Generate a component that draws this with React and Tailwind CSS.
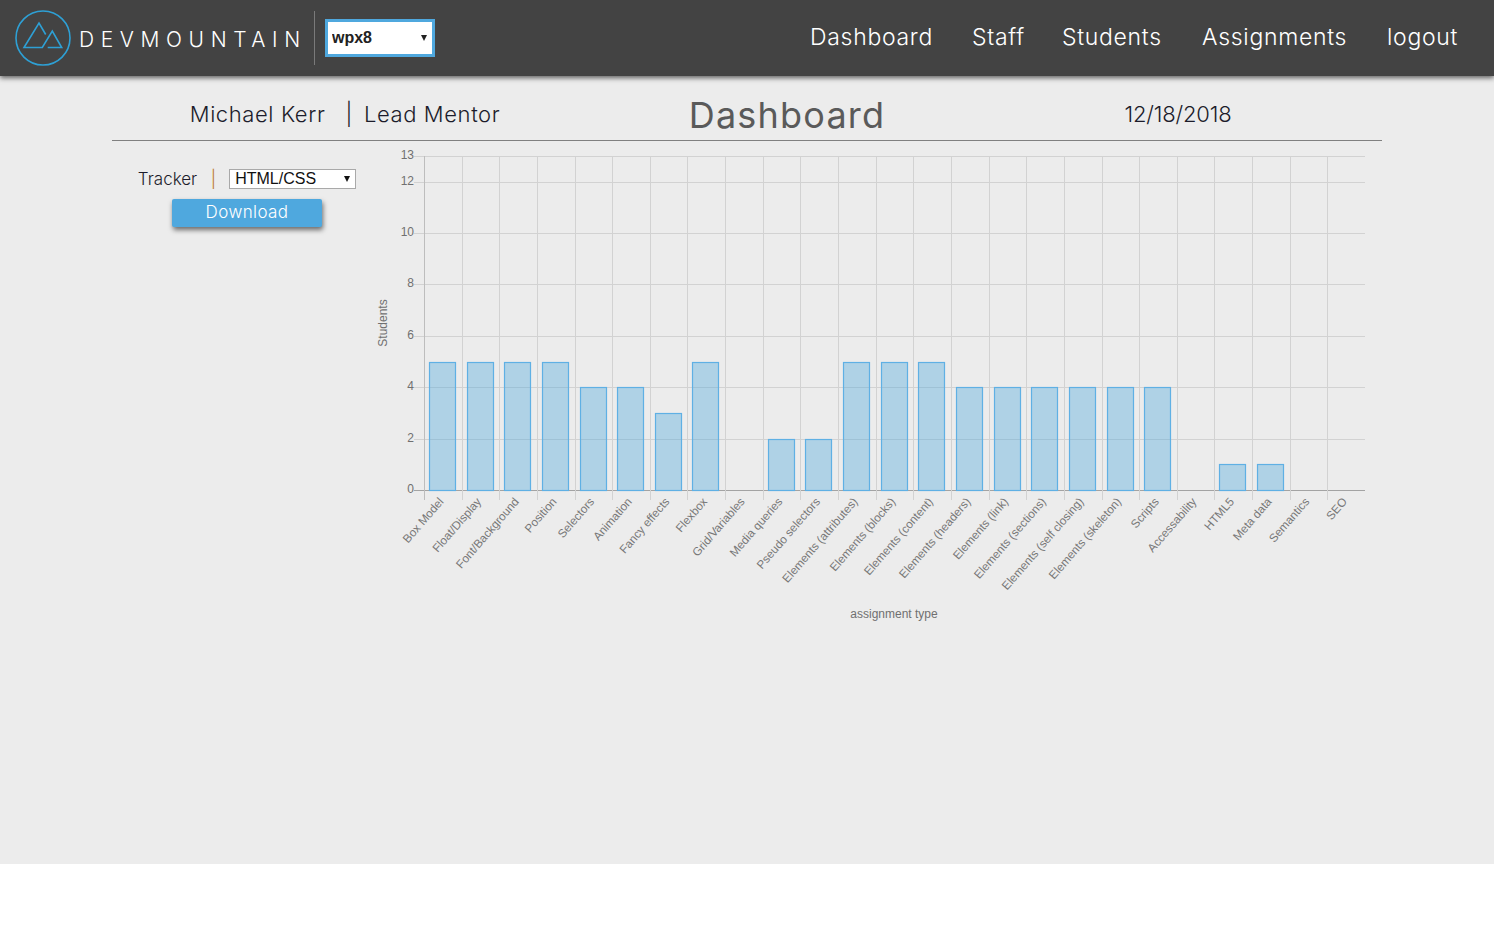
import { useState } from 'react';

const navLinks = [
  { label: 'Dashboard', cls: 'w-[122px]' },
  { label: 'Staff', cls: 'w-[50px]' },
  { label: 'Students', cls: 'w-[100px]' },
  { label: 'Assignments', cls: 'w-[145px]' },
  { label: 'logout', cls: 'w-[72px]' },
];

const trackerData = [
  ['Box Model', 5], ['Float/Display', 5], ['Font/Background', 5], ['Position', 5],
  ['Selectors', 4], ['Animation', 4], ['Fancy effects', 3], ['Flexbox', 5],
  ['Grid/Variables', 0], ['Media queries', 2], ['Pseudo selectors', 2],
  ['Elements (attributes)', 5], ['Elements (blocks)', 5], ['Elements (content)', 5],
  ['Elements (headers)', 4], ['Elements (link)', 4], ['Elements (sections)', 4],
  ['Elements (self closing)', 4], ['Elements (skeleton)', 4], ['Scripts', 4],
  ['Accessability', 0], ['HTML5', 1], ['Meta data', 1], ['Semantics', 0], ['SEO', 0],
];

// chart geometry, viewBox uses page coordinates
const LEFT = 424;
const RIGHT = 1365;
const BASE = 490.5;
const UNIT = 25.7;
const STEP = (RIGHT - LEFT) / trackerData.length;
const yTicks = [13, 12, 10, 8, 6, 4, 2, 0];

const snapY = (v) => Math.floor(BASE - v * UNIT) + 0.5;

function Logo() {
  return (
    <svg width="58" height="58" viewBox="14 9 58 58" fill="none" stroke="#2ea0d5" className="shrink-0">
      <circle cx="43" cy="38" r="27" strokeWidth="1.6" />
      <path d="M45.7 34.5L39 23L24 47.5H42.3L52.3 31L61.7 47.5H47.7" strokeWidth="1.6" />
    </svg>
  );
}

function Chart() {
  return (
    <svg width="1010" height="490" viewBox="372 141 1010 490" className="block shrink-0 -ml-[10px]" style={{ fontFamily: '"Liberation Sans", Arial, sans-serif' }}>
      {yTicks.map((t) => {
        const y = snapY(t);
        return (
          <g key={t}>
            <line x1="414" x2={RIGHT} y1={y} y2={y} stroke={t === 0 ? '#a3a3a3' : '#d2d2d2'} strokeWidth="1" />
            <text x="414" y={y + 2} textAnchor="end" fontSize="12" fill="#707070">{t}</text>
          </g>
        );
      })}
      {trackerData.map((_, i) => {
        const x = Math.round(LEFT + i * STEP) + 0.5;
        return <line key={i} x1={x} x2={x} y1="156" y2="500" stroke={i === 0 ? '#bdbdbd' : '#d2d2d2'} strokeWidth="1" />;
      })}
      {trackerData.map(([name, value], i) => {
        if (!value) return null;
        const x = Math.round(LEFT + i * STEP + 5) + 0.5;
        const y = snapY(value);
        return (
          <rect key={name} x={x} y={y} width="26" height={snapY(0) - y} fill="rgba(77,168,222,0.38)" stroke="#5fb0e4" strokeWidth="1.2" />
        );
      })}
      {trackerData.map(([name], i) => {
        const x = LEFT + (i + 0.5) * STEP + 1.5;
        return (
          <text key={name} x={x} y="502" textAnchor="end" fontSize="11.7" fill="#777" transform={`rotate(-49 ${x} 502)`}>
            {name}
          </text>
        );
      })}
      <text transform="translate(387 323) rotate(-90)" textAnchor="middle" fontSize="12" fill="#707070">Students</text>
      <text x="894" y="618" textAnchor="middle" fontSize="12" fill="#707070">assignment type</text>
    </svg>
  );
}

export default function App() {
  const [cohort, setCohort] = useState('wpx8');
  const [tracker, setTracker] = useState('HTML/CSS');

  return (
    <div className="min-h-[939px] bg-white font-['Inter',sans-serif]">
      <div className="h-[864px] bg-[#ececec]">
        {/* Header */}
        <header className="h-[76px] bg-[#434343] shadow-[0_2px_5px_rgba(0,0,0,0.6)] flex items-center pl-[14px] pr-[35px]">
          <Logo />
          <span className="ml-[7px] pt-[2px] text-[21px] leading-none tracking-[6.6px] font-light text-white w-[229px] whitespace-nowrap">DEVMOUNTAIN</span>
          <div className="ml-[6px] h-[54px] w-px bg-[#7a7a7a]" />
          <div className="relative ml-[10px]">
            <select
              value={cohort}
              onChange={(e) => setCohort(e.target.value)}
              className="appearance-none block w-[110px] h-[38px] bg-white border-[3px] border-[#4fa8de] pl-[4px] text-[16px] font-bold text-[#222] font-['Liberation_Sans',sans-serif] outline-none"
            >
              <option>wpx8</option>
            </select>
            <span className="absolute right-[8px] top-[16px] w-0 h-0 border-x-[3.5px] border-x-transparent border-t-[6px] border-t-[#222] pointer-events-none" />
          </div>
          <nav className="ml-auto flex gap-[40px] text-[23px] tracking-[0.7px] text-white font-light pb-[2px]">
            {navLinks.map((link) => (
              <a key={link.label} className={`${link.cls} whitespace-nowrap cursor-pointer`}>{link.label}</a>
            ))}
          </nav>
        </header>

        <main className="w-[1270px] mx-auto">
          {/* Title row */}
          <div className="h-[65px] border-b border-[#808080] grid grid-cols-[466px_418px_1fr] items-center text-[#1c1c2b]">
            <div className="flex justify-center text-[22px] tracking-[0.6px] font-light whitespace-nowrap pt-[10px]">
              <span>Michael Kerr</span>
              <span className="ml-[20px] mr-[11px]">|</span>
              <span>Lead Mentor</span>
            </div>
            <h1 className="text-center text-[36px] tracking-[1.2px] text-[#5a5a5a] font-normal pt-[12px]">Dashboard</h1>
            <div className="text-center text-[22px] tracking-[-0.2px] font-light pr-[22px] pt-[10px]">12/18/2018</div>
          </div>

          <div className="flex">
            {/* Tracker controls */}
            <div className="w-[270px] shrink-0 flex flex-col items-center pt-[25px]">
              <div className="flex items-center text-[17px] font-light text-[#1c1c2b]">
                <span className="w-[58px] whitespace-nowrap translate-y-px">Tracker</span>
                <span className="ml-[15px] text-[#b8741a] translate-y-px">|</span>
                <div className="relative ml-[13px]">
                  <select
                    value={tracker}
                    onChange={(e) => setTracker(e.target.value)}
                    className="appearance-none block w-[127px] h-[20px] bg-white border border-[#a9a9a9] pl-[5px] text-[16px] leading-none text-[#111] font-['Liberation_Sans',sans-serif] outline-none"
                  >
                    <option>HTML/CSS</option>
                    <option>JavaScript</option>
                  </select>
                  <span className="absolute right-[6px] top-[7px] w-0 h-0 border-x-[3.5px] border-x-transparent border-t-[6px] border-t-[#111] pointer-events-none" />
                </div>
              </div>
              <button className="mt-[7px] w-[150px] h-[28px] rounded-[2px] bg-[#4fa8de] text-white text-[17px] tracking-[0.4px] font-light shadow-[1px_3px_5px_rgba(0,0,0,0.55)]">
                Download
              </button>
            </div>

            <Chart />
          </div>
        </main>
      </div>
    </div>
  );
}
